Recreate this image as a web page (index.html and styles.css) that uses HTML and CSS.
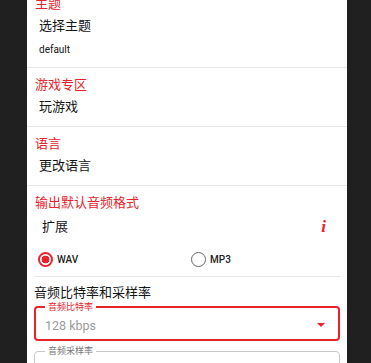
FILE: index.html
```html
<!DOCTYPE html>
<html lang="zh">
<head>
  <meta charset="UTF-8">
  <title>设置</title>
  <link rel="stylesheet" href="styles.css">
</head>
<body>

  <div id="settings">

    <div class="section">
      <div class="cat">主题</div>
      <div class="item">选择主题</div>
      <div class="item sub">default</div>
    </div>

    <div class="section">
      <div class="cat">游戏专区</div>
      <div class="item">玩游戏</div>
    </div>

    <div class="section">
      <div class="cat">语言</div>
      <div class="item">更改语言</div>
    </div>

    <div class="section last">
      <div class="cat">输出默认音频格式</div>
      <div class="item row">
        <span>扩展</span>
        <span class="info">i</span>
      </div>

      <div class="radios">
        <label class="radio checked"><span class="dot"></span>WAV</label>
        <label class="radio"><span class="dot"></span>MP3</label>
      </div>

      <div class="heading">音频比特率和采样率</div>

      <fieldset class="field active">
        <legend>音频比特率</legend>
        <div class="select">
          <span>128 kbps</span>
          <span class="caret"></span>
        </div>
      </fieldset>

      <fieldset class="field">
        <legend>音频采样率</legend>
        <div class="select">
          <span>44100 Hz</span>
          <span class="caret"></span>
        </div>
      </fieldset>
    </div>

  </div>

</body>
</html>
```

FILE: styles.css
```css
body {
  margin: 0;
  background: #202020;
  font-family: Roboto, "Noto Sans CJK SC", sans-serif;
  color: #151515;
  overflow: hidden;
}
#settings {
  width: 320px;
  margin: -13px 0 0 27px;
  background: #fff;
  min-height: 420px;
}
.section {
  padding: 8px 0 6px;
  border-bottom: 1px solid #e8e8e8;
}
.section.last {
  border-bottom: none;
}
.cat {
  color: #e8232c;
  font-size: 13px;
  line-height: 18px;
  padding-left: 8px;
}
.item {
  font-size: 13px;
  line-height: 26px;
  padding-left: 12px;
}
.item.sub {
  font-size: 10px;
  line-height: 22px;
}
.item.row {
  display: flex;
  justify-content: space-between;
  align-items: center;
  line-height: 30px;
  padding: 0 21px 0 15px;
}
.info {
  color: #e8232c;
  font-family: "Liberation Serif", serif;
  font-style: italic;
  font-weight: bold;
  font-size: 17px;
}
.radios {
  display: grid;
  grid-template-columns: 153px 1fr;
  align-items: center;
  height: 34px;
  margin: 0 7px;
  padding-left: 4px;
  border-bottom: 1px solid #e8e8e8;
}
.radio {
  display: flex;
  align-items: center;
  gap: 4px;
  font-size: 10px;
  font-weight: 500;
  color: #222;
}
.dot {
  width: 15px;
  height: 15px;
  box-sizing: border-box;
  border: 1.5px solid #666;
  border-radius: 50%;
}
.radio.checked .dot {
  border: 2px solid #e8232c;
  background: radial-gradient(circle, #e8232c 0 3.6px, #fff 4.2px);
}
.heading {
  font-size: 13px;
  line-height: 18px;
  margin: 7px 0 0;
  padding-left: 7px;
}
.field {
  margin: 0 7px 5px;
  padding: 3px 11px 4px 10px;
  border: 1px solid #c8c8c8;
  border-radius: 4px;
}
.field.active {
  border: 2px solid #e8232c;
  padding: 2px 10px 3px 9px;
}
.field legend {
  font-size: 9px;
  line-height: 10px;
  color: #777;
  padding: 0 3px;
  margin-left: 0;
}
.field.active legend {
  color: #e8232c;
}
.select {
  display: flex;
  justify-content: space-between;
  align-items: center;
  height: 22px;
  font-size: 12.5px;
  color: #9a9a9a;
}
.caret {
  width: 0;
  height: 0;
  border-left: 4px solid transparent;
  border-right: 4px solid transparent;
  border-top: 4px solid #e8232c;
  margin-right: 3px;
}
```
